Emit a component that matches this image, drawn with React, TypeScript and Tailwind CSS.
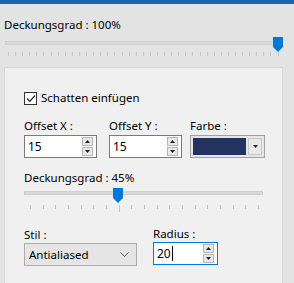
import React from 'react';

const font = { fontFamily: '"Noto Sans", "Open Sans", sans-serif' };

function Ticks({ count, long }: { count: number; long?: number }) {
  return (
    <div className="flex items-start justify-between">
      {Array.from({ length: count }).map((_, i) => (
        <div
          key={i}
          className={`w-px bg-[#c4c4c4] ${i === long ? 'h-[7px]' : 'h-[4px]'}`}
        />
      ))}
    </div>
  );
}

function Thumb() {
  return (
    <svg width="10" height="15" viewBox="0 0 10 15" className="block">
      <path d="M0 0 H10 V10 L5 15 L0 10 Z" fill="#0078d7" />
    </svg>
  );
}

function Spin() {
  return (
    <div className="flex flex-col gap-px">
      <div className="flex h-[9px] w-[11px] items-center justify-center border border-[#b5b5b5] bg-[#e8e8e8]">
        <svg width="5" height="3" viewBox="0 0 5 3"><path d="M2.5 0 L5 3 H0 Z" fill="#222" /></svg>
      </div>
      <div className="flex h-[9px] w-[11px] items-center justify-center border border-[#b5b5b5] bg-[#e8e8e8]">
        <svg width="5" height="3" viewBox="0 0 5 3"><path d="M0 0 H5 L2.5 3 Z" fill="#222" /></svg>
      </div>
    </div>
  );
}

function NumField({ value, width, focused }: { value: string; width: string; focused?: boolean }) {
  return (
    <div
      className={`flex h-[23px] items-center justify-between border bg-white pl-[3px] pr-[3px] ${width} ${
        focused ? 'border-[#0078d7]' : 'border-[#7a7a7a]'
      }`}
    >
      <span className="flex items-center text-[12px] leading-[16px] text-black">
        {value}
        {focused && <span className="ml-px h-[15px] w-px bg-black" />}
      </span>
      <Spin />
    </div>
  );
}

export default function App() {
  return (
    <div className="h-[283px] w-[294px] overflow-hidden bg-[#e3e3e3] text-[11.5px] leading-[16px] text-black" style={font}>
      <div className="h-[4px] bg-[#1d64ae]" />
      <div className="px-[4px] pt-[13px]">
        <div>Deckungsgrad : 100%</div>
        <div className="relative mt-[4px] h-[15px]">
          <div className="absolute left-[1px] right-[11px] top-[4px] h-[4px] border border-[#cfcfcf] bg-[#dadada]" />
          <div className="absolute right-[7px] top-0">
            <Thumb />
          </div>
        </div>
        <div className="ml-[4px] mr-[11px]">
          <Ticks count={39} />
        </div>
      </div>

      <div className="ml-[4px] mr-[11px] mt-[11px] h-[250px] border border-[#d9d9d9] bg-[#f0f0f0] px-[19px] pt-[22px]">
        <div className="flex items-center gap-[4px]">
          <div className="flex h-[13px] w-[13px] items-center justify-center border border-[#333] bg-white">
            <svg width="10" height="9" viewBox="0 0 10 9">
              <path d="M1 4.5 L3.8 7.3 L9 1.5" fill="none" stroke="#222" strokeWidth="1.2" />
            </svg>
          </div>
          <span>Schatten einfügen</span>
        </div>

        <div className="mt-[12px] flex gap-[12px]">
          <div className="flex flex-col gap-[1px]">
            <span>Offset X :</span>
            <NumField value="15" width="w-[73px]" />
          </div>
          <div className="flex flex-col gap-[1px]">
            <span>Offset Y :</span>
            <NumField value="15" width="w-[73px]" />
          </div>
          <div className="ml-[-4px] flex flex-col gap-[1px]">
            <span>Farbe :</span>
            <div className="flex h-[23px] w-[75px] items-center gap-[2px] border border-[#a0a0a0] bg-[#e6e6e6] p-[2px]">
              <div className="h-full flex-1 bg-[#233163]" />
              <div className="flex h-full w-[14px] items-center justify-center border border-[#c8c8c8] bg-[#e8e8e8]">
                <svg width="5" height="3" viewBox="0 0 5 3"><path d="M0 0 H5 L2.5 3 Z" fill="#222" /></svg>
              </div>
            </div>
          </div>
        </div>

        <div className="mt-[12px]">Deckungsgrad : 45%</div>
        <div className="relative mt-[2px] h-[15px] w-[239px]">
          <div className="absolute left-0 right-0 top-[3px] h-[4px] border border-[#cfcfcf] bg-[#dadada]" />
          <div className="absolute left-[89px] top-0">
            <Thumb />
          </div>
        </div>
        <div className="ml-[6px] mt-[2px] w-[229px]">
          <Ticks count={19} long={7} />
        </div>

        <div className="mt-[15px] flex gap-[16px]">
          <div className="flex flex-col">
            <span>Stil :</span>
            <div className="flex h-[23px] w-[113px] items-center justify-between border border-[#adadad] bg-[#e5e5e5] pl-[4px] pr-[7px]">
              <span>Antialiased</span>
              <svg width="9" height="5" viewBox="0 0 9 5">
                <path d="M0.5 0.5 L4.5 4.5 L8.5 0.5" fill="none" stroke="#555" strokeWidth="1" />
              </svg>
            </div>
          </div>
          <div className="-mt-px flex flex-col">
            <span>Radius :</span>
            <NumField value="20" width="w-[65px]" focused />
          </div>
        </div>
      </div>
    </div>
  );
}
